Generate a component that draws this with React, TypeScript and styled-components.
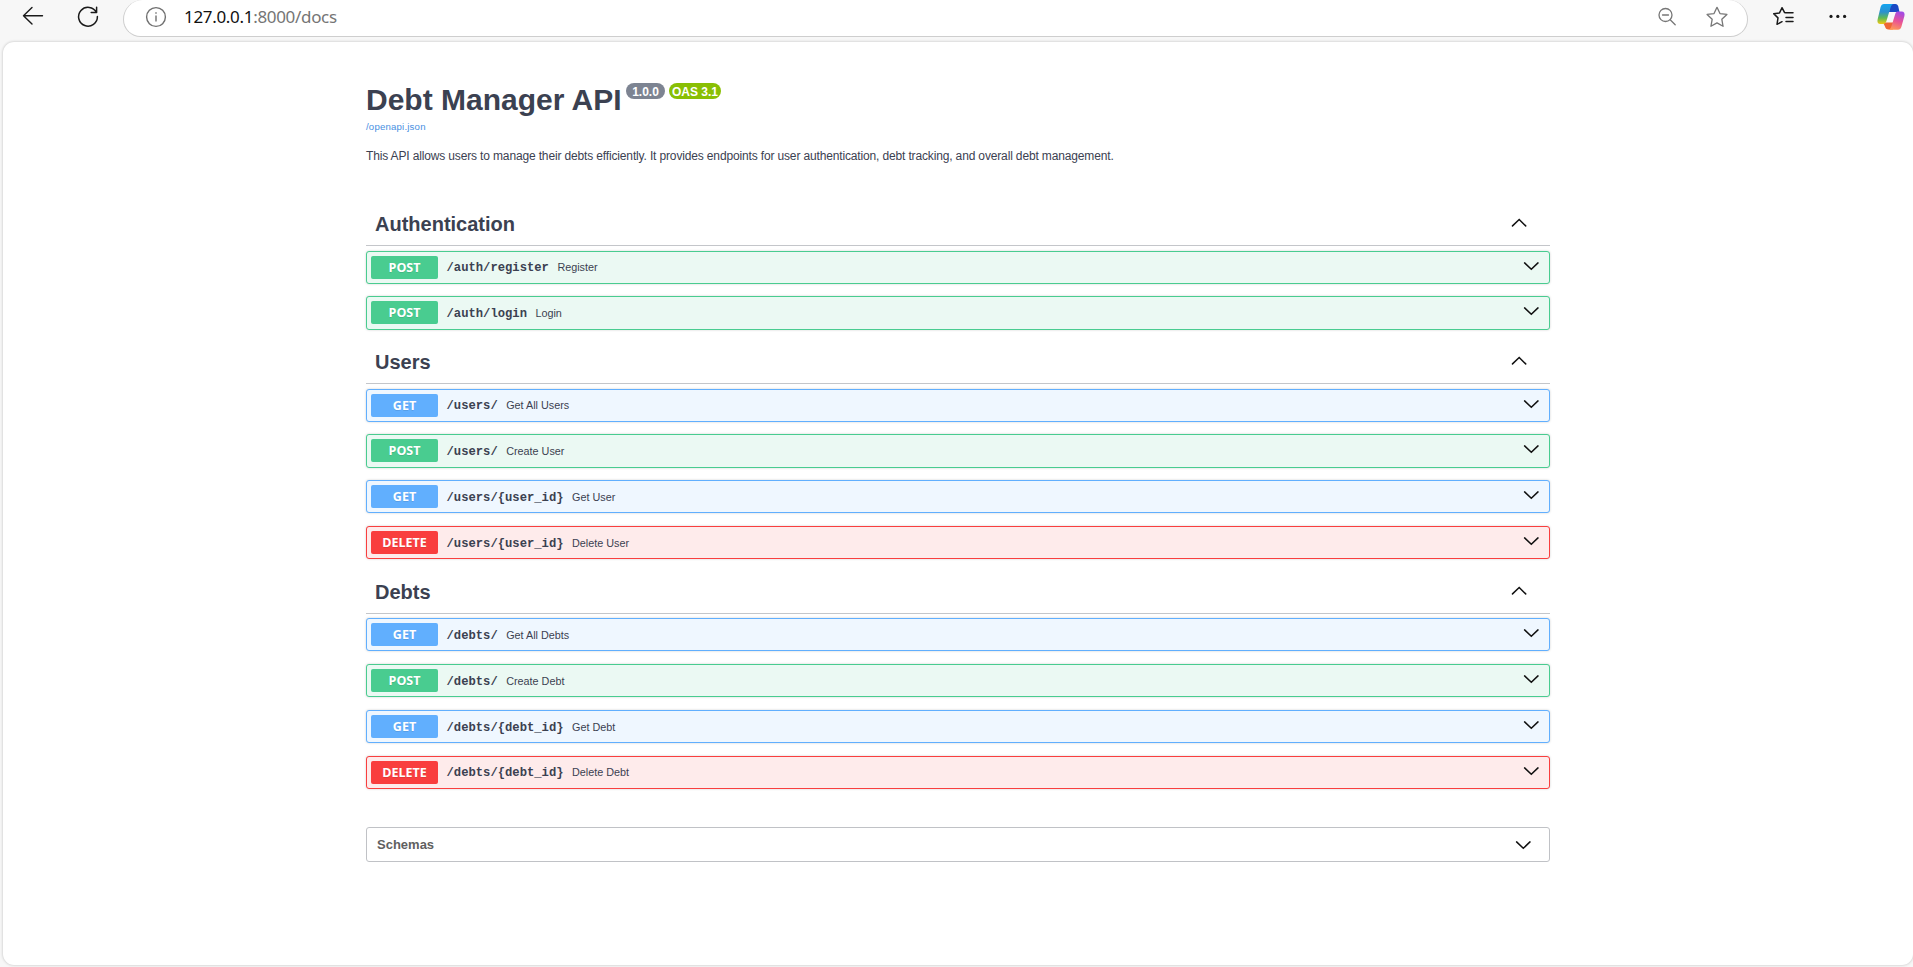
import React from "react";
import styled, { createGlobalStyle } from "styled-components";

const Global = createGlobalStyle`
  *{box-sizing:border-box}
  body{margin:0;background:#f7f7f7;font-family:"Liberation Sans",Arial,sans-serif;color:#3b4151}
`;

const Window = styled.div`
  height: 967px;
  overflow: hidden;
  display: flex;
  flex-direction: column;
`;
const Toolbar = styled.header`
  height: 42px;
  flex: none;
  display: flex;
  align-items: flex-start;
  padding-left: 21px;
`;
const NavIcon = styled.svg<{ $gap?: number; $top?: number }>`
  flex: none;
  margin-top: ${(p) => p.$top ?? 5}px;
  margin-left: ${(p) => p.$gap ?? 0}px;
`;
const AddressBar = styled.div`
  width: 1625px;
  height: 37px;
  margin-left: 23px;
  border: 1px solid #cecece;
  border-top: 0;
  border-radius: 20px 20px 18px 18px;
  background: #fff;
  display: flex;
  align-items: flex-start;
  padding-left: 20px;
`;
const Url = styled.span`
  font: 400 17px/22px "Noto Sans", sans-serif;
  color: #757575;
  margin: 6px 0 0 17px;
  width: 1473px;
  white-space: nowrap;
  letter-spacing: -0.32px;
  b {
    font-weight: 400;
    color: #111;
  }
`;
const Page = styled.main`
  flex: none;
  width: 1910px;
  height: 923px;
  margin-left: 3px;
  border-radius: 11px;
  background: #fff;
  box-shadow: 0 0 3px rgba(0, 0, 0, 0.24);
`;
const Content = styled.div`
  width: 1184px;
  margin-left: 363px;
  padding-top: 40px;
`;
const TitleRow = styled.div`
  display: flex;
  align-items: flex-start;
  height: 38px;
`;
const Title = styled.h1`
  margin: 0 1px 0 0;
  width: 255px;
  font-size: 30px;
  line-height: 36px;
  white-space: nowrap;
`;
const Badge = styled.span<{ $bg: string; $w: number }>`
  width: ${(p) => p.$w}px;
  height: 16px;
  margin: 1px 0 0 4px;
  border-radius: 8px;
  background: ${(p) => p.$bg};
  color: #fff;
  font-weight: 700;
  font-size: 12px;
  line-height: 18px;
  text-align: center;
  white-space: nowrap;
`;
const SpecLink = styled.a`
  display: block;
  height: 18px;
  color: #4990e2;
  font-size: 9.6px;
  line-height: 13px;
  letter-spacing: 0.2px;
`;
const Description = styled.p`
  margin: 11px 0 41.28px;
  font-size: 12px;
  line-height: 14px;
  letter-spacing: -0.148px;
`;
const SectionHead = styled.div`
  height: 46.25px;
`;
const SectionBar = styled.div`
  height: 41.8px;
  padding: 0 23px 3px 9px;
  border-bottom: 1px solid #c4c6ca;
  display: flex;
  align-items: center;
  justify-content: space-between;
`;
const SectionTitle = styled.h2`
  margin: 1.5px 0 0;
  font-size: 20px;
  line-height: 24px;
`;

type Method = "GET" | "POST" | "DELETE";
const tones: Record<Method, { main: string; pale: string }> = {
  GET: { main: "#61affe", pale: "#eff7ff" },
  POST: { main: "#49cc90", pale: "#ebf9f3" },
  DELETE: { main: "#f93e3e", pale: "#feebeb" },
};

const Operation = styled.div<{ $m: Method }>`
  height: 33.17px;
  margin-bottom: 12.73px;
  border: 1px solid ${(p) => tones[p.$m].main};
  border-radius: 3px;
  background: ${(p) => tones[p.$m].pale};
  box-shadow: 0 0 2.4px rgba(0, 0, 0, 0.19);
  display: flex;
  align-items: center;
  padding: 0 10px 0 4px;

  svg {
    margin-bottom: 3px;
  }
`;
const MethodTag = styled.span<{ $m: Method }>`
  width: 67px;
  height: 23px;
  border-radius: 2px;
  background: ${(p) => tones[p.$m].main};
  color: #fff;
  font: 700 12.5px/23px "Open Sans", "Noto Sans", sans-serif;
  text-align: center;
  text-shadow: 0 1px 0 rgba(0, 0, 0, 0.1);
`;
const Path = styled.code`
  margin: 2px 0 0 8.5px;
  font: 700 12.2px/16px "Liberation Mono", monospace;
`;
const Summary = styled.span`
  flex: 1;
  margin-left: 8.5px;
  font-size: 10.8px;
  line-height: 14px;
`;
const Schemas = styled.div`
  height: 35px;
  margin-top: 38px;
  border: 1px solid #c0c2c6;
  border-radius: 3px;
  display: flex;
  align-items: center;
  justify-content: space-between;
  padding: 0 18px 0 10px;
`;
const SchemasTitle = styled.h3`
  margin: 0;
  font-size: 13px;
  color: #606060;
`;

const Chevron = ({ up }: { up?: boolean }) => (
  <svg width="16" height="16" viewBox="0 0 16 16" fill="none" stroke="#111" strokeWidth="1.5" strokeLinecap="round">
    <path d={up ? "M1.5 10.9 8.200 4.500l6.500 6.400" : "M1.600 4.900 8.300 11.300l6.700-6.400"} />
  </svg>
);

const star = "M10 1.2l2.7 5.7 6.3.8-4.6 4.4 1.1 6.3-5.5-3-5.5 3 1.1-6.3L1 7.7l6.3-.8z";

const sections: { name: string; ops: [Method, string, string][] }[] = [
  { name: "Authentication", ops: [["POST", "/auth/register", "Register"], ["POST", "/auth/login", "Login"]] },
  {
    name: "Users",
    ops: [
      ["GET", "/users/", "Get All Users"],
      ["POST", "/users/", "Create User"],
      ["GET", "/users/{user_id}", "Get User"],
      ["DELETE", "/users/{user_id}", "Delete User"],
    ],
  },
  {
    name: "Debts",
    ops: [
      ["GET", "/debts/", "Get All Debts"],
      ["POST", "/debts/", "Create Debt"],
      ["GET", "/debts/{debt_id}", "Get Debt"],
      ["DELETE", "/debts/{debt_id}", "Delete Debt"],
    ],
  },
];

const CopilotLogo = () => (
  <NavIcon $gap={30} $top={4} width="29" height="27" viewBox="0 0 29 27">
    <defs>
      <linearGradient id="cool" x1="0" y1="0" x2="0" y2="1">
        <stop offset="0" stopColor="#12a5f0" />
        <stop offset=".4" stopColor="#2b91cf" />
        <stop offset=".7" stopColor="#5fba55" />
        <stop offset="1" stopColor="#f2c812" />
      </linearGradient>
      <linearGradient id="warm" x1=".6" y1="0" x2=".3" y2="1">
        <stop offset="0" stopColor="#a34ae4" />
        <stop offset=".5" stopColor="#e95396" />
        <stop offset="1" stopColor="#ff9a55" />
      </linearGradient>
    </defs>
    <path d="M13 0h5.500c1.500 0 2.300 1 2.800 2.600L22.500 8H12z" fill="#1949c4" />
    <path d="M6 18.500h10V25.500H11.500C9.500 25.500 8.500 24.500 8 22.500z" fill="#ee6635" />
    <path d="M7 0h10c-2 0-3 2-3.600 4L9.600 16.500C9 18.500 8 20 6 20H3.500C.8 20 0 18 .6 15.500L3.600 3C4.200 1 5.300 0 7 0z" fill="url(#cool)" />
    <path d="M21 25.700H11c2 0 3-2 3.600-4L18.400 9.500C19 7.800 20 7.500 22 7.500h2.500c2.700 0 3.500 2 2.900 4.500l-3 10.700c-.6 2-1.700 3-3.400 3z" fill="url(#warm)" />
  </NavIcon>
);

const BrowserBar = () => (
  <Toolbar>
    <NavIcon width="24" height="22" viewBox="0 0 24 22" fill="none" stroke="#1a1a1a" strokeWidth="1.4" strokeLinecap="round" strokeLinejoin="round">
      <path d="M21.5 10.7H2.5M11 2.5 2.5 10.7 11 19" />
    </NavIcon>
    <NavIcon $gap={31} width="24" height="24" viewBox="0 0 24 24" fill="none" stroke="#1a1a1a" strokeWidth="1.5" strokeLinecap="round" strokeLinejoin="round">
      <path d="M20.4 7.5A9.4 9.4 0 1 0 21.4 11.5M20.6 2.2v5.4h-5.4" />
    </NavIcon>
    <AddressBar>
      <NavIcon $gap={1} width="22" height="24" viewBox="0 0 22 24" fill="none" stroke="#707070" strokeWidth="1.4">
        <circle cx="11" cy="12" r="9.4" />
        <path d="M11 10.5v6M11 7.2v1.6" />
      </NavIcon>
      <Url>
        <b>127.0.0.1</b>:8000/docs
      </Url>
      <NavIcon width="20" height="24" viewBox="0 0 20 24" fill="none" stroke="#777" strokeWidth="1.3" strokeLinecap="round">
        <circle cx="8.5" cy="10" r="6.5" />
        <path d="M5.5 10h6M13.2 14.7l5 5" />
      </NavIcon>
      <NavIcon $gap={29} $top={6} width="22" height="22" viewBox="0 0 20 20" fill="none" stroke="#777" strokeWidth="1.2" strokeLinejoin="round">
        <path d={star} />
      </NavIcon>
    </AddressBar>
    <NavIcon $gap={24} width="23" height="24" viewBox="0 0 23 24" fill="none" stroke="#1a1a1a" strokeWidth="1.5" strokeLinejoin="round" strokeLinecap="round">
      <path d="M13.600 7.800 12.600 7.600 10 2.700 7.500 7.900 1.700 8.700l4.300 4.200-1 6.400 5-2.600M14 7.800h7M14 12.500h7M14 16.600h7" />
    </NavIcon>
    <NavIcon $gap={34} width="18" height="24" viewBox="0 0 18 24" fill="#1a1a1a">
      <circle cx="2" cy="11.4" r="1.6" />
      <circle cx="8.8" cy="11.4" r="1.6" />
      <circle cx="15.6" cy="11.4" r="1.6" />
    </NavIcon>
    <CopilotLogo />
  </Toolbar>
);

export default function App() {
  return (
    <Window>
      <Global />
      <BrowserBar />
      <Page>
        <Content>
          <TitleRow>
            <Title>Debt Manager API</Title>
            <Badge $bg="#7d8492" $w={39}>1.0.0</Badge>
            <Badge $bg="#89bf04" $w={52}>OAS 3.1</Badge>
          </TitleRow>
          <SpecLink>/openapi.json</SpecLink>
          <Description>
            This API allows users to manage their debts efficiently. It provides endpoints for user authentication, debt tracking, and overall debt management.
          </Description>
          {sections.map((s) => (
            <section key={s.name}>
              <SectionHead>
                <SectionBar>
                  <SectionTitle>{s.name}</SectionTitle>
                  <Chevron up />
                </SectionBar>
              </SectionHead>
              {s.ops.map(([m, path, text]) => (
                <Operation key={m + path} $m={m}>
                  <MethodTag $m={m}>{m}</MethodTag>
                  <Path>{path}</Path>
                  <Summary>{text}</Summary>
                  <Chevron />
                </Operation>
              ))}
            </section>
          ))}
          <Schemas>
            <SchemasTitle>Schemas</SchemasTitle>
            <Chevron />
          </Schemas>
        </Content>
      </Page>
    </Window>
  );
}
